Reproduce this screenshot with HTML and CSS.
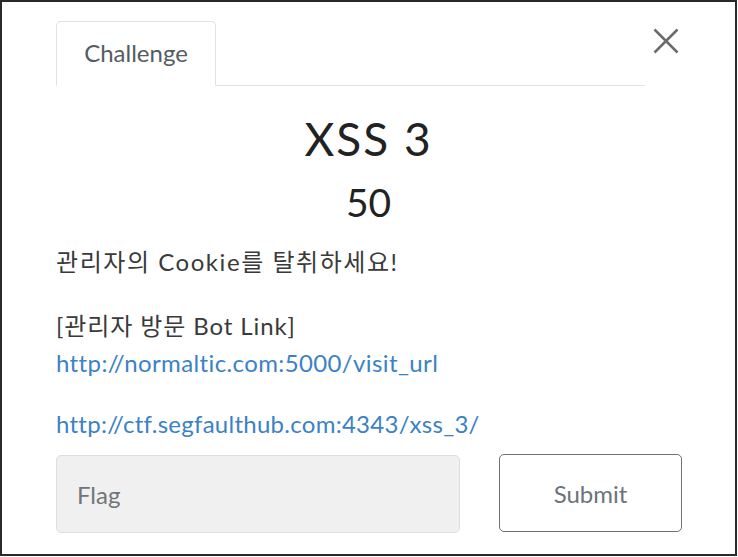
FILE: index.html
```html
<!DOCTYPE html>
<html lang="ko">
<head>
<meta charset="utf-8">
<link rel="stylesheet" href="styles.css">
</head>
<body>
<div class="frame">
  <div class="header">
    <div class="tabs">
      <div class="tab">Challenge</div>
    </div>
    <button class="close" aria-label="Close">
      <svg width="26" height="26" viewBox="0 0 26 26"><path d="M1.5 1.5 L24.5 24.5 M24.5 1.5 L1.5 24.5" stroke="#6b6b6b" stroke-width="2.5" fill="none"/></svg>
    </button>
  </div>
  <h1 class="title">XSS 3</h1>
  <h2 class="value">50</h2>
  <div class="desc">
    <p class="p1">관리자의 Cookie를 탈취하세요!</p>
    <p class="p2"><span class="bot">[관리자 방문 Bot Link]</span><br><a class="link1" href="#">http://normaltic.com:5000/visit_url</a></p>
    <p class="p3"><a class="link2" href="#">http://ctf.segfaulthub.com:4343/xss_3/</a></p>
  </div>
  <div class="form">
    <div class="flag">Flag</div>
    <button class="submit">Submit</button>
  </div>
</div>
</body>
</html>
```
FILE: styles.css
```css
html, body {
  margin: 0;
  padding: 0;
  background: #fff;
}
body {
  font-family: "Lato", "Noto Sans CJK KR", sans-serif;
  color: #333;
}
.frame {
  box-sizing: border-box;
  width: 737px;
  height: 556px;
  border: 2px solid #2a2a2a;
  padding: 19px 54px 0 54px;
}
.header {
  display: flex;
  align-items: flex-start;
}
.tabs {
  width: 589px;
  border-bottom: 1px solid #dee2e6;
  display: flex;
}
.tab {
  box-sizing: border-box;
  width: 160px;
  height: 65px;
  margin-bottom: -1px;
  border: 1px solid #dee2e6;
  border-bottom-color: #fff;
  border-radius: 5px 5px 0 0;
  display: flex;
  align-items: center;
  justify-content: center;
  font-size: 24px;
  color: #555c63;
  padding-bottom: 2px;
}
.close {
  margin: 7px 0 0 8px;
  padding: 0;
  border: 0;
  background: none;
  width: 26px;
  height: 26px;
  display: flex;
}
.title {
  margin: 27px 0 0 0;
  text-align: center;
  font-weight: 400;
  font-size: 46px;
  letter-spacing: 2px;
  line-height: 52px;
  color: #222;
}
.value {
  margin: 14px 0 0 0;
  text-align: center;
  font-weight: 400;
  font-size: 39px;
  line-height: 47px;
  color: #222;
}
.desc {
  font-size: 24px;
  line-height: 37px;
  color: #3a3a3a;
}
.desc p {
  margin: 0;
}
.desc .p1 {
  margin-top: 17px;
  letter-spacing: 1.55px;
}
.desc .p2 { margin-top: 27px; }
.desc .p3 { margin-top: 24px; }
.bot {
  letter-spacing: 0.9px;
}
.desc a {
  color: #3b82c4;
  text-decoration: none;
}
.desc .link1 { letter-spacing: 0.38px; }
.desc .link2 { letter-spacing: 0.27px; }
.form {
  display: grid;
  grid-template-columns: 404px 183px;
  column-gap: 39px;
  margin-top: 13px;
}
.flag {
  box-sizing: border-box;
  height: 78px;
  background: #f0f0f0;
  border: 1px solid #dcdfe2;
  border-radius: 5px;
  padding-left: 20px;
  display: flex;
  align-items: center;
  font-size: 24px;
  color: #70767c;
}
.submit {
  box-sizing: border-box;
  height: 78px;
  background: #fff;
  border: 1.5px solid #6c737a;
  border-radius: 5px;
  font-family: "Lato", sans-serif;
  font-size: 24px;
  color: #6c737a;
  margin-top: -1px;
}
```
